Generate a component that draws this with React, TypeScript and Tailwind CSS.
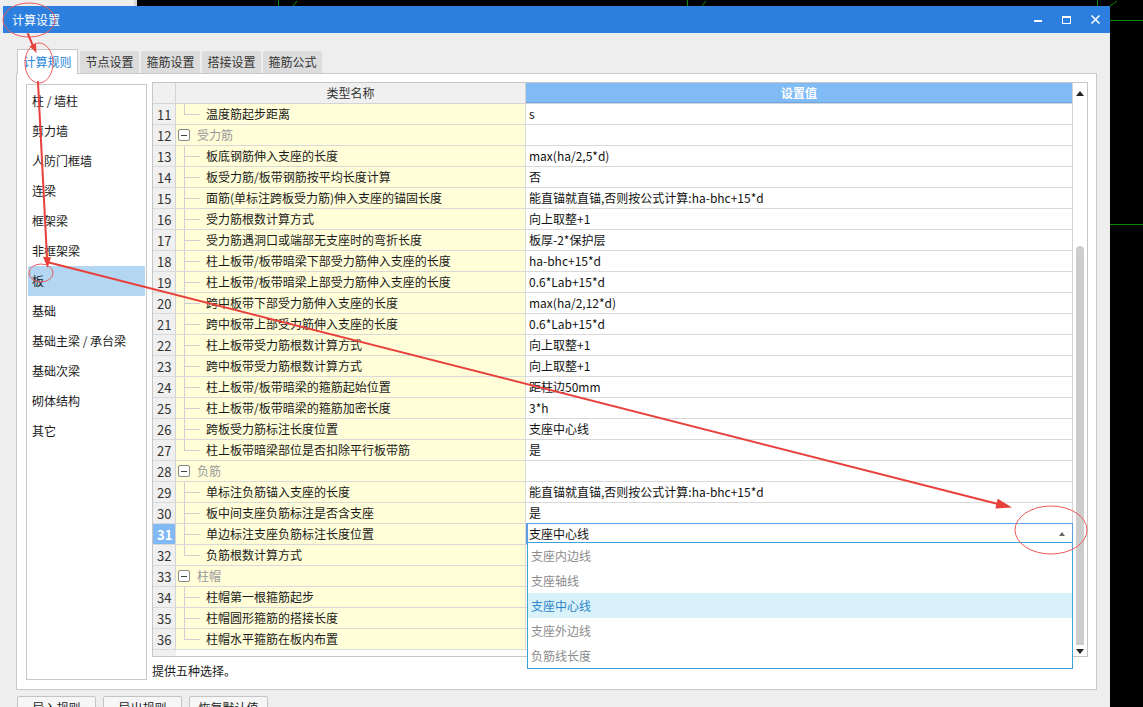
import React from "react";

type Row =
  | { n: number; kind: "group"; name: string }
  | { n: number; kind: "item"; name: string; value?: string; last?: boolean };

const rows: Row[] = [
  { n: 11, kind: "item", name: "温度筋起步距离", value: "s", last: true },
  { n: 12, kind: "group", name: "受力筋" },
  { n: 13, kind: "item", name: "板底钢筋伸入支座的长度", value: "max(ha/2,5*d)" },
  { n: 14, kind: "item", name: "板受力筋/板带钢筋按平均长度计算", value: "否" },
  { n: 15, kind: "item", name: "面筋(单标注跨板受力筋)伸入支座的锚固长度", value: "能直锚就直锚,否则按公式计算:ha-bhc+15*d" },
  { n: 16, kind: "item", name: "受力筋根数计算方式", value: "向上取整+1" },
  { n: 17, kind: "item", name: "受力筋遇洞口或端部无支座时的弯折长度", value: "板厚-2*保护层" },
  { n: 18, kind: "item", name: "柱上板带/板带暗梁下部受力筋伸入支座的长度", value: "ha-bhc+15*d" },
  { n: 19, kind: "item", name: "柱上板带/板带暗梁上部受力筋伸入支座的长度", value: "0.6*Lab+15*d" },
  { n: 20, kind: "item", name: "跨中板带下部受力筋伸入支座的长度", value: "max(ha/2,12*d)" },
  { n: 21, kind: "item", name: "跨中板带上部受力筋伸入支座的长度", value: "0.6*Lab+15*d" },
  { n: 22, kind: "item", name: "柱上板带受力筋根数计算方式", value: "向上取整+1" },
  { n: 23, kind: "item", name: "跨中板带受力筋根数计算方式", value: "向上取整+1" },
  { n: 24, kind: "item", name: "柱上板带/板带暗梁的箍筋起始位置", value: "距柱边50mm" },
  { n: 25, kind: "item", name: "柱上板带/板带暗梁的箍筋加密长度", value: "3*h" },
  { n: 26, kind: "item", name: "跨板受力筋标注长度位置", value: "支座中心线" },
  { n: 27, kind: "item", name: "柱上板带暗梁部位是否扣除平行板带筋", value: "是", last: true },
  { n: 28, kind: "group", name: "负筋" },
  { n: 29, kind: "item", name: "单标注负筋锚入支座的长度", value: "能直锚就直锚,否则按公式计算:ha-bhc+15*d" },
  { n: 30, kind: "item", name: "板中间支座负筋标注是否含支座", value: "是" },
  { n: 31, kind: "item", name: "单边标注支座负筋标注长度位置", value: "" },
  { n: 32, kind: "item", name: "负筋根数计算方式", last: true },
  { n: 33, kind: "group", name: "柱帽" },
  { n: 34, kind: "item", name: "柱帽第一根箍筋起步" },
  { n: 35, kind: "item", name: "柱帽圆形箍筋的搭接长度" },
  { n: 36, kind: "item", name: "柱帽水平箍筋在板内布置", last: true },
];

const categories = [
  "柱 / 墙柱",
  "剪力墙",
  "人防门框墙",
  "连梁",
  "框架梁",
  "非框架梁",
  "板",
  "基础",
  "基础主梁 / 承台梁",
  "基础次梁",
  "砌体结构",
  "其它",
];

const tabs = ["计算规则", "节点设置", "箍筋设置", "搭接设置", "箍筋公式"];
const options = ["支座内边线", "支座轴线", "支座中心线", "支座外边线", "负筋线长度"];

function NameCell({ row }: { row: Row }) {
  if (row.kind === "group") {
    return (
      <div className="flex h-full items-center pl-[2px]">
        <span className="flex h-[12px] w-[12px] items-center justify-center rounded-[2px] border border-[#8a8a8a] bg-white">
          <span className="h-px w-[6px] bg-[#444]" />
        </span>
        <span className="ml-[7px] text-[#999]">{row.name}</span>
      </div>
    );
  }
  return (
    <div className="relative flex h-full items-center pl-[30px]">
      <span
        className={`absolute left-[8px] top-0 w-px bg-[#cfcfcf] ${row.last ? "h-1/2" : "h-full"}`}
      />
      <span className="absolute left-[8px] top-1/2 h-px w-[16px] bg-[#cfcfcf]" />
      <span className="text-[#1a1a1a]">{row.name}</span>
    </div>
  );
}

function SettingsTable() {
  return (
    <div className="relative flex h-[575px] w-[936px] border border-[#c6c6c6] bg-white">
      <div className="flex w-[919px] flex-col">
        <div className="flex h-[21px] border-b border-[#d4d4d4]">
          <div className="w-[23px] border-r border-[#d4d4d4] bg-[#f0f0f0]" />
          <div className="flex w-[350px] items-center justify-center border-r border-[#d4d4d4] bg-[#f0f0f0] text-[#333]">
            类型名称
          </div>
          <div className="flex flex-1 items-center justify-center border-b border-[#6aa7ea] bg-[#80bbf6] font-bold text-white">
            设置值
          </div>
        </div>
        {rows.map((row) => {
          const active = row.n === 31;
          return (
            <div key={row.n} className="flex h-[21px] border-b border-[#d9d9d9]">
              <div
                className={`flex w-[23px] items-center border-r border-[#d4d4d4] pl-[4px] text-[13px] ${
                  active ? "bg-[#80b9f4] font-bold text-white" : "bg-[#f0f0f0] text-[#333]"
                }`}
              >
                {row.n}
              </div>
              <div className="w-[350px] border-r border-[#d9d9d9] bg-[#fffed9]">
                <NameCell row={row} />
              </div>
              <div className="flex flex-1 items-center pl-[3px] text-[#111]">
                {row.kind === "item" ? row.value : ""}
              </div>
            </div>
          );
        })}
        <div className="flex flex-1">
          <div className="w-[23px] bg-[#f0f0f0]" />
        </div>
      </div>

      <div className="flex w-[15px] flex-col border-l border-[#d4d4d4]">
        <div className="flex h-[20px] items-center justify-center">
          <span className="h-0 w-0 border-x-[4px] border-b-[5px] border-x-transparent border-b-[#222]" />
        </div>
        <div className="flex flex-1 justify-center pt-[143px]">
          <div className="h-[399px] w-[8px] rounded-t-full bg-[#cdcdcd]" />
        </div>
        <div className="flex h-[10px] items-center justify-center">
          <span className="h-0 w-0 border-x-[4px] border-t-[5px] border-x-transparent border-t-[#222]" />
        </div>
      </div>

      {/* combobox editor on row 31 */}
      <div className="absolute left-[373px] top-[440px] flex h-[21px] w-[547px] items-center justify-between border border-l-2 border-[#5d9fe2] bg-white pl-[1px] pr-[7px] text-[#111]">
        <span>支座中心线</span>
        <span className="h-0 w-0 border-x-[3px] border-b-[4px] border-x-transparent border-b-[#666]" />
      </div>
      <div className="absolute left-[374px] top-[459px] z-10 flex w-[546px] flex-col border border-[#3ea3da] bg-white">
        {options.map((o) => (
          <div
            key={o}
            className={`flex h-[25px] items-center pl-[3px] ${
              o === "支座中心线" ? "bg-[#d9f1f9] text-[#2c85c8]" : "text-[#8c8c8c]"
            }`}
          >
            {o}
          </div>
        ))}
      </div>
    </div>
  );
}

function Annotations() {
  return (
    <svg className="pointer-events-none absolute inset-0 z-50" width="1143" height="707">
      <g fill="none" stroke="#f05a5a" strokeWidth="1">
        <ellipse cx="29" cy="20" rx="26" ry="17" />
        <ellipse cx="39" cy="63" rx="14" ry="20" />
        <ellipse cx="41" cy="273" rx="12" ry="9" />
        <ellipse cx="1051" cy="530" rx="36" ry="24" />
      </g>
      <g stroke="#e8403b" strokeWidth="2" strokeLinecap="round">
        <line x1="28" y1="34" x2="33" y2="46" />
        <line x1="38" y1="82" x2="47" y2="258" />
        <line x1="47" y1="262" x2="998" y2="504" />
      </g>
      <g fill="#e8403b">
        <polygon points="36.5,53 29.6,46.2 36,43.4" />
        <polygon points="47.6,268 43,256.8 51,257.2" />
        <polygon points="1012,507.5 995.3,508.4 997.7,498.7" />
      </g>
    </svg>
  );
}

export default function App() {
  return (
    <div className="relative h-[707px] w-[1143px] overflow-hidden bg-black font-['Noto_Sans_CJK_SC','Noto_Sans',sans-serif] text-[12px] leading-none">
      {/* desktop behind the dialog */}
      <div className="absolute inset-y-0 left-0 w-[137px] border-r-[3px] border-[#d6d6d6] bg-[#eeeeee]" />
      <svg className="absolute inset-0" width="1143" height="707">
        <g stroke="#0b8a0b" strokeWidth="1">
          <line x1="278.5" y1="0" x2="278.5" y2="7" />
          <line x1="292" y1="7" x2="297" y2="1" />
          <line x1="687.5" y1="0" x2="687.5" y2="7" />
          <line x1="701" y1="7" x2="706" y2="1" />
          <line x1="1097.5" y1="0" x2="1097.5" y2="7" />
          <line x1="1110" y1="6" x2="1117" y2="1" />
          <line x1="1110" y1="20.5" x2="1143" y2="20.5" />
          <line x1="1110" y1="224.5" x2="1143" y2="224.5" />
        </g>
      </svg>

      {/* dialog */}
      <div className="absolute left-[3px] top-[6px] flex h-[720px] w-[1107px] flex-col bg-[#eeeeee]">
        <div className="flex h-[27px] items-center justify-between bg-[#2c7fde] pl-[9px] pr-[10px] text-white">
          <span>计算设置</span>
          <div className="flex items-center gap-[20px]">
            <span className="mt-[3px] h-[2px] w-[8px] bg-white" />
            <span className="h-[8px] w-[9px] border border-t-2 border-white" />
            <svg width="9" height="9" viewBox="0 0 9 9">
              <path d="M0.5 0.5 L8.5 8.5 M8.5 0.5 L0.5 8.5" stroke="white" strokeWidth="1.5" />
            </svg>
          </div>
        </div>

        <div className="flex flex-col px-[13px] pt-[16px]">
          <div className="flex h-[24px] items-end gap-[2px] pl-[1px]">
            {tabs.map((t, i) =>
              i === 0 ? (
                <div
                  key={t}
                  className="relative z-10 -mb-px flex h-[25px] w-[61px] items-center justify-center border border-b-0 border-[#c8c8c8] bg-white text-[#2586dc]"
                >
                  {t}
                </div>
              ) : (
                <div
                  key={t}
                  className="flex h-[22px] w-[59px] items-center justify-center rounded-t-[2px] bg-[#dcdcdc] text-[#333]"
                >
                  {t}
                </div>
              ),
            )}
          </div>

          <div className="flex h-[617px] w-[1081px] border border-[#c9c9c9] bg-white pl-[9px] pt-[8px]">
            <div className="mt-[2px] flex h-[596px] w-[121px] flex-col border border-[#c8c8c8] bg-white px-px pt-px">
              {categories.map((c) => (
                <div
                  key={c}
                  className={`flex h-[30px] items-center pl-[4px] text-[#1a1a1a] ${
                    c === "板" ? "bg-[#b3d7f3]" : ""
                  }`}
                >
                  {c}
                </div>
              ))}
            </div>
            <div className="ml-[5px] flex flex-col">
              <SettingsTable />
              <div className="mt-[8px] text-[#1a1a1a]">提供五种选择。</div>
            </div>
          </div>

          <div className="mt-[6px] flex gap-[7px] pl-[1px]">
            {["导入规则", "导出规则", "恢复默认值"].map((b) => (
              <div
                key={b}
                className="flex h-[24px] w-[79px] items-center justify-center rounded-[2px] border border-[#c4c4c4] bg-[#f6f6f6] text-[#1a1a1a]"
              >
                {b}
              </div>
            ))}
          </div>
        </div>
      </div>

      <Annotations />
    </div>
  );
}
